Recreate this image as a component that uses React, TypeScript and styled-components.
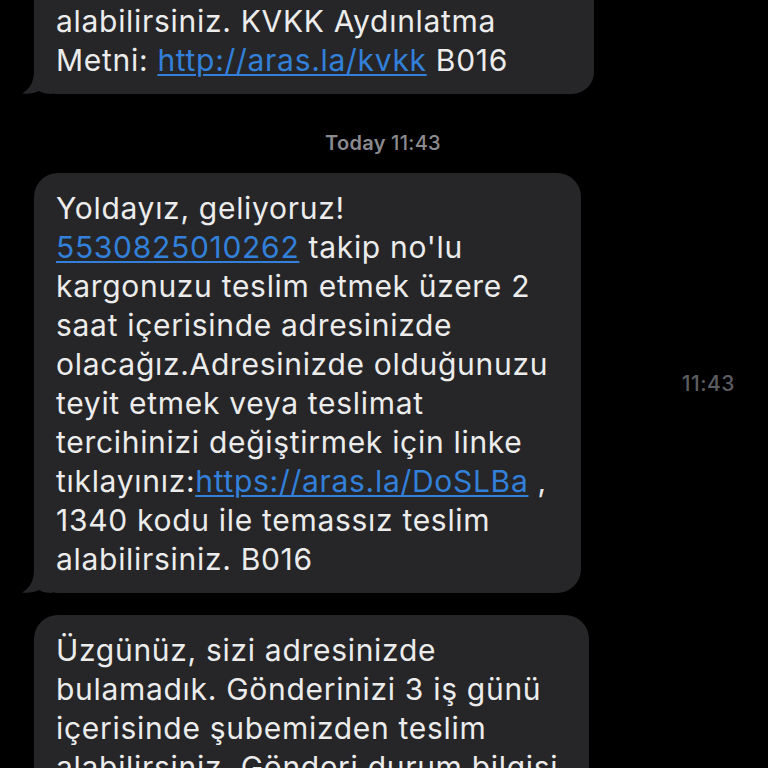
import React from "react";
import styled, { createGlobalStyle } from "styled-components";

const Global = createGlobalStyle`
  html, body { margin: 0; padding: 0; background: #000; }
  body { font-family: "Inter", "Liberation Sans", sans-serif; }
`;

const Screen = styled.div`
  width: 768px;
  height: 768px;
  overflow: hidden;
  background: #000;
  display: flex;
  flex-direction: column;
  padding-left: 34px;
  box-sizing: border-box;
`;

const Bubble = styled.div<{ $w: number; $clipTop?: boolean }>`
  position: relative;
  width: ${(p) => p.$w}px;
  box-sizing: border-box;
  background: #262628;
  border-radius: ${(p) => (p.$clipTop ? "0 0 22px 22px" : "24px")};
  padding: ${(p) => (p.$clipTop ? "2px 22px 14px" : "16px 22px 14px")};
  color: #ececec;
  font-size: 30px;
  line-height: 39px;
  letter-spacing: 0.7px;
  flex-shrink: 0;
`;

const Line = styled.div`
  white-space: nowrap;
`;

const Link = styled.span`
  color: #3280da;
  text-decoration: underline;
  text-decoration-thickness: 1.5px;
  text-underline-offset: 3px;
`;

const TailSvg = styled.svg`
  position: absolute;
  left: -12px;
  bottom: 0;
  width: 30px;
  height: 24px;
`;

const Tail = () => (
  <TailSvg viewBox="0 0 30 24">
    <path
      d="M12 0 C12 12 8 19 0 23.5 C6 24.3 12 23.5 17 21 C20 23 24 24 30 24 L30 0 Z"
      fill="#262628"
    />
  </TailSvg>
);

const DayLabel = styled.div`
  align-self: center;
  margin: 37px 36px 18px 0;
  font-size: 20px;
  line-height: 24px;
  color: #8a8a8f;
  font-weight: 600;
  letter-spacing: 0.3px;
  span { font-weight: 500; }
`;

const Row = styled.div`
  display: flex;
  align-items: center;
`;

const SideTime = styled.div`
  margin-left: auto;
  margin-right: 33px;
  font-size: 21px;
  font-weight: 500;
  letter-spacing: 0.5px;
  color: #5c5c60;
`;

const Spacer = styled.div`
  height: 22px;
  flex-shrink: 0;
`;

export default function App() {
  return (
    <>
      <Global />
      <Screen>
        <Bubble $w={560} $clipTop>
          <Line>alabilirsiniz. KVKK Aydınlatma</Line>
          <Line>
            Metni: <Link>http://aras.la/kvkk</Link> B016
          </Line>
          <Tail />
        </Bubble>
        <DayLabel>
          Today <span>11:43</span>
        </DayLabel>
        <Row>
          <Bubble $w={547}>
            <Line>Yoldayız, geliyoruz!</Line>
            <Line>
              <Link>5530825010262</Link> takip no'lu
            </Line>
            <Line>kargonuzu teslim etmek üzere 2</Line>
            <Line>saat içerisinde adresinizde</Line>
            <Line>olacağız.Adresinizde olduğunuzu</Line>
            <Line>teyit etmek veya teslimat</Line>
            <Line>tercihinizi değiştirmek için linke</Line>
            <Line>
              tıklayınız:<Link>https://aras.la/DoSLBa</Link> ,
            </Line>
            <Line>1340 kodu ile temassız teslim</Line>
            <Line>alabilirsiniz. B016</Line>
            <Tail />
          </Bubble>
          <SideTime>11:43</SideTime>
        </Row>
        <Spacer />
        <Bubble $w={555}>
          <Line>Üzgünüz, sizi adresinizde</Line>
          <Line>bulamadık. Gönderinizi 3 iş günü</Line>
          <Line>içerisinde şubemizden teslim</Line>
          <Line>alabilirsiniz. Gönderi durum bilgisi</Line>
          <Line>için lütfen takip ediniz.</Line>
        </Bubble>
      </Screen>
    </>
  );
}
